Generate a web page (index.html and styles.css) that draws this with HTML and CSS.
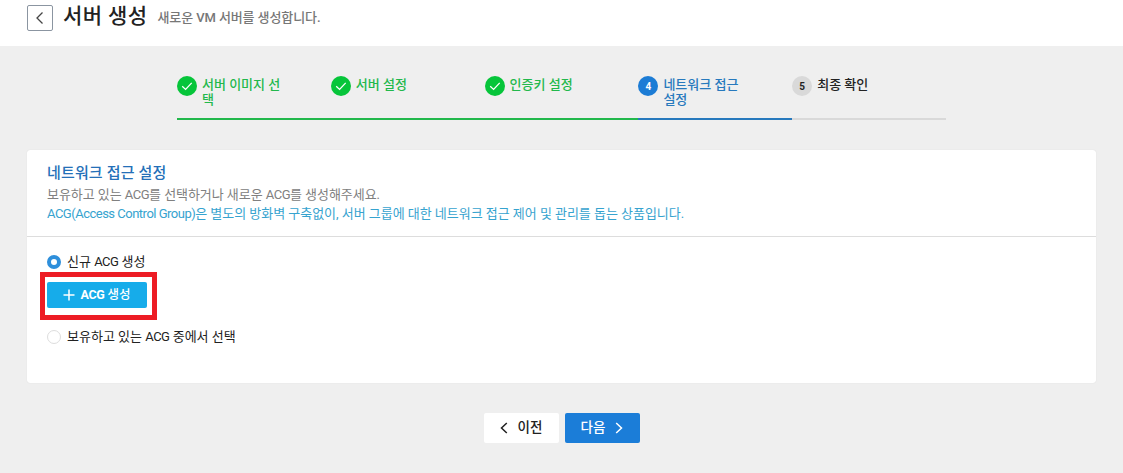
FILE: index.html
```html
<!DOCTYPE html>
<html lang="ko">
<head>
    <meta charset="UTF-8">
    <meta name="viewport" content="width=device-width, initial-scale=1.0">
    <title>서버 생성</title>
    <link rel="stylesheet" href="styles.css">
</head>
<body>
    <header class="header">
        <button class="back" aria-label="뒤로">
            <svg width="24" height="24" viewBox="0 0 24 24"><path d="M14.5 6.5 9 12l5.5 5.5"/></svg>
        </button>
        <h1>서버 생성</h1>
        <p class="subtitle">새로운 VM 서버를 생성합니다.</p>
    </header>

    <ol class="steps">
        <li class="step done">
            <span class="mark"><svg width="20" height="20" viewBox="0 0 20 20"><path d="M5.2 10.2 8.6 13.4 14.7 6.9"/></svg></span>
            <span class="label">서버 이미지 선택</span>
        </li>
        <li class="step done">
            <span class="mark"><svg width="20" height="20" viewBox="0 0 20 20"><path d="M5.2 10.2 8.6 13.4 14.7 6.9"/></svg></span>
            <span class="label">서버 설정</span>
        </li>
        <li class="step done">
            <span class="mark"><svg width="20" height="20" viewBox="0 0 20 20"><path d="M5.2 10.2 8.6 13.4 14.7 6.9"/></svg></span>
            <span class="label">인증키 설정</span>
        </li>
        <li class="step active">
            <span class="mark">4</span>
            <span class="label">네트워크 접근 설정</span>
        </li>
        <li class="step">
            <span class="mark">5</span>
            <span class="label">최종 확인</span>
        </li>
    </ol>

    <main class="card">
        <div class="card-head">
            <h2>네트워크 접근 설정</h2>
            <p class="desc">보유하고 있는 <span class="en">ACG</span>를 선택하거나 새로운 <span class="en">ACG</span>를 생성해주세요.</p>
            <p class="info"><span class="en">ACG(Access Control Group)</span>은 별도의 방화벽 구축없이, 서버 그룹에 대한 네트워크 접근 제어 및 관리를 돕는 상품입니다.</p>
        </div>
        <div class="card-body">
            <label class="option">
                <input type="radio" name="acg" checked>
                <span>신규 <span class="en">ACG</span> 생성</span>
            </label>
            <div class="highlight">
                <button class="create">
                    <svg width="12" height="12" viewBox="0 0 12 12"><path d="M6 .5v11M.5 6h11"/></svg>
                    <span><b>ACG</b> 생성</span>
                </button>
            </div>
            <label class="option">
                <input type="radio" name="acg">
                <span>보유하고 있는 <span class="en">ACG</span> 중에서 선택</span>
            </label>
        </div>
    </main>

    <footer class="actions">
        <button class="btn prev">
            <svg width="8" height="12" viewBox="0 0 8 12"><path d="M6.8 1 1.5 6l5.3 5"/></svg>
            <span>이전</span>
        </button>
        <button class="btn next">
            <span>다음</span>
            <svg width="8" height="12" viewBox="0 0 8 12"><path d="M1.2 1 6.5 6l-5.3 5"/></svg>
        </button>
    </footer>
</body>
</html>
```

FILE: styles.css
```css
* {
    box-sizing: border-box;
}

body {
    margin: 0;
    background: #efefef;
    color: #222;
    font-family: Roboto, "Noto Sans CJK KR", sans-serif;
    font-size: 13px;
}

h1, h2, p, ol {
    margin: 0;
    padding: 0;
}

button {
    border: none;
    padding: 0;
    font-family: inherit;
    cursor: pointer;
}

svg {
    display: block;
    fill: none;
    stroke: currentColor;
    stroke-width: 1.5;
}

.en {
    letter-spacing: -.5px;
}

.header {
    display: flex;
    height: 46px;
    padding-left: 27px;
    background: #fff;
}

.back {
    width: 26px;
    height: 26px;
    margin-top: 5px;
    border: 1px solid #8b95a1;
    border-radius: 2px;
    background: #fff;
    color: #444;
}

.back svg {
    stroke-width: 1.3;
}

h1 {
    margin: 0 0 0 10px;
    font-size: 21px;
    font-weight: 500;
    letter-spacing: .4px;
    line-height: 32px;
}

.subtitle {
    margin-left: 10px;
    color: #777;
    font-weight: 500;
    letter-spacing: -.1px;
    line-height: 35px;
}

.steps {
    display: grid;
    grid-template-columns: repeat(5, 1fr);
    width: 769px;
    height: 44px;
    margin: 30px 0 0 177px;
    list-style: none;
}

.step {
    display: flex;
    align-items: flex-start;
    border-bottom: 2px solid #d9d9d9;
}

.mark {
    display: flex;
    align-items: center;
    justify-content: center;
    width: 20px;
    height: 20px;
    border-radius: 50%;
    background: #d9d9d9;
    font-size: 10px;
    font-weight: 700;
}

.label {
    width: 82px;
    margin: 1px 0 0 5px;
    font-weight: 500;
    line-height: 15px;
}

.done {
    border-color: #22b84c;
    color: #22b84c;
}

.done .mark {
    background: #06c53a;
    color: #fff;
}

.done .mark svg {
    stroke-width: 1.3;
}

.active {
    border-color: #2779bd;
    color: #2779bd;
}

.active .mark {
    background: #1c7cd5;
    color: #fff;
}

.card {
    height: 233px;
    margin: 30px 27px 0;
    border-radius: 3px;
    background: #fff;
    box-shadow: 0 0 1px rgba(0, 0, 0, .15);
}

.card-head {
    height: 87px;
    padding: 12px 20px 0;
    border-bottom: 1px solid #ddd;
}

h2 {
    color: #2470b8;
    font-size: 15px;
    font-weight: 500;
    letter-spacing: .15px;
    line-height: 22px;
}

.desc {
    color: #808080;
    letter-spacing: -.05px;
    line-height: 22px;
}

.info {
    color: #36a3cf;
    letter-spacing: -.03px;
    line-height: 15px;
}

.card-body {
    display: flex;
    flex-direction: column;
    align-items: flex-start;
    padding: 16px 13px 0;
}

.option {
    display: flex;
    align-items: center;
    height: 18px;
    margin-left: 7px;
    line-height: 18px;
}

.option input {
    appearance: none;
    width: 14px;
    height: 14px;
    margin: 0 6px 0 0;
    border: 1px solid #ddd;
    border-radius: 50%;
}

.option input:checked {
    border: 4px solid #2e8fdb;
}

/* pulls out the create button */
.highlight {
    margin: 1px 0 8px;
    padding: 5px 5px 7px 2px;
    border: 5px solid #ed1c24;
}

.create {
    display: flex;
    align-items: center;
    justify-content: center;
    gap: 5px;
    width: 100px;
    height: 26px;
    border-radius: 2px;
    background: #16acea;
    color: #fff;
    font-size: 12.5px;
    font-weight: 500;
}

.create b {
    letter-spacing: -.3px;
}

.create span {
    padding-bottom: 3px;
}

.actions {
    display: flex;
    justify-content: center;
    gap: 6px;
    margin-top: 30px;
}

.btn {
    display: flex;
    align-items: center;
    justify-content: center;
    gap: 10px;
    width: 75px;
    height: 30px;
    border-radius: 2px;
    font-size: 13.5px;
    font-weight: 500;
}

.btn span {
    padding-bottom: 5px;
}

.prev {
    background: #fff;
    color: #222;
}

.next {
    background: #1b7dd8;
    color: #fff;
}
```
